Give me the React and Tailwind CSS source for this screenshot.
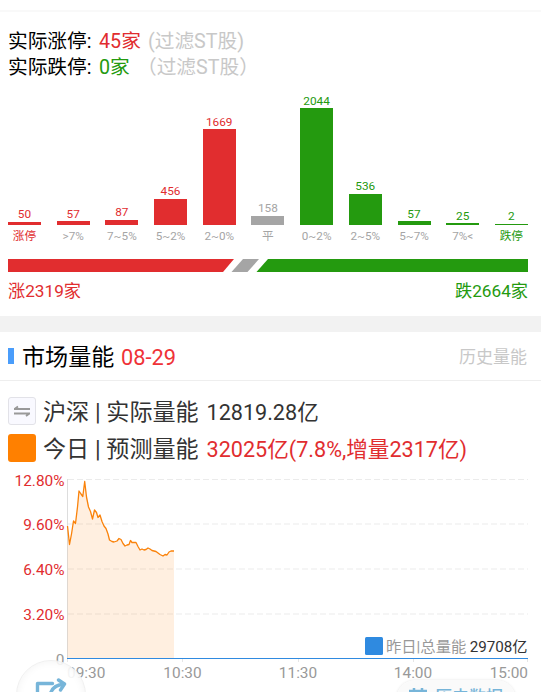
const BARS = [
  { v: 50, label: "涨停", tone: "up", strong: true },
  { v: 57, label: ">7%", tone: "up" },
  { v: 87, label: "7~5%", tone: "up" },
  { v: 456, label: "5~2%", tone: "up" },
  { v: 1669, label: "2~0%", tone: "up" },
  { v: 158, label: "平", tone: "flat" },
  { v: 2044, label: "0~2%", tone: "down" },
  { v: 536, label: "2~5%", tone: "down" },
  { v: 57, label: "5~7%", tone: "down" },
  { v: 25, label: "7%<", tone: "down" },
  { v: 2, label: "跌停", tone: "down", strong: true },
];

const TEXT = { up: "text-[#e12d2f]", flat: "text-[#a5a5a5]", down: "text-[#249a0f]" };
const FILL = { up: "bg-[#e12d2f]", flat: "bg-[#a5a5a5]", down: "bg-[#249a0f]" };

function Bar({ v, label, tone, strong }) {
  return (
    <div className="flex w-[33px] flex-col items-center">
      <div className="flex h-[129.5px] w-full flex-col items-center justify-end">
        <span className={`text-[11.8px] leading-[13.5px] ${TEXT[tone]}`}>{v}</span>
        <div className={`w-full shrink-0 ${FILL[tone]}`} style={{ height: Math.max(v * 0.057, 0.9) }} />
      </div>
      <span className={`mt-[4.5px] text-[11.7px] leading-[14px] whitespace-nowrap ${strong ? TEXT[tone] : "text-[#a5a5a5]"}`}>{label}</span>
    </div>
  );
}

function Distribution() {
  return (
    <section className="h-[316px] px-2">
      <div className="-mx-2 h-[12px] border-b-2 border-[#f9f9f9]" />
      <div className="mt-[17px] text-[19.7px] leading-[26px] text-black">
        <div className="flex">
          <span className="w-[91px]">实际涨停:</span>
          <span className="w-[49px] text-[#e12d2f]">45家</span>
          <span className="text-[#c8c8c8]">(过滤ST股)</span>
        </div>
        <div className="flex">
          <span className="w-[91px]">实际跌停:</span>
          <span className="w-[38px] text-[#249a0f]">0家</span>
          <span className="text-[#c8c8c8]">（过滤ST股）</span>
        </div>
      </div>
      <div className="mt-[14px] flex w-[520px] justify-between">
        {BARS.map((b) => (
          <Bar key={b.label} {...b} />
        ))}
      </div>
      <svg className="mt-[16px] block" width="520" height="13" viewBox="0 0 520 13">
        <path d="M0 0H226L215 13H0Z" fill="#e12d2f" />
        <path d="M235 0H251L239.500 13H223.500Z" fill="#a5a5a5" />
        <path d="M260 0H520V13H248.500Z" fill="#249a0f" />
      </svg>
      <div className="mt-[7px] flex w-[520px] justify-between text-[17.2px] leading-6">
        <span className="text-[#e12d2f]">涨2319家</span>
        <span className="text-[#249a0f]">跌2664家</span>
      </div>
    </section>
  );
}

const LINE =
  "67.500,526 69.500,544.500 71.500,534 73.500,521 75.500,523.500 77.500,507 79,491 81,494 82.800,496.500 84.700,481.500 86.500,497 88.500,507 90.500,511.500 92.500,519 94.500,510 96.500,512.500 98,517.500 100,515 102,521.500 104,526 106,528.500 108,534 109.500,540 112,541.500 114,542 117,541 119,538.500 121,539.500 123,543.500 125,546 127,545 129,544.500 130.500,540.500 132,542.500 136,542.500 138,546.500 140,550 142,549 144,550 146,549.500 148,548 150,549 152,550.500 156,551.500 158,553 160,554.500 162,555.500 163,556 165,554.500 167,555 169,552 171,551 174,551";

const GRID = [
  [480, "12.80%"],
  [524.5, "9.60%"],
  [569.5, "6.40%"],
  [614.5, "3.20%"],
];

function VolumeChart() {
  return (
    <svg className="block" width="541" height="227" viewBox="0 465 541 227" fontSize="15.4">
      {GRID.map(([y, label]) => (
        <g key={y}>
          <path d={`M68 ${y - 0.5}H528`} stroke="#ebebeb" strokeDasharray="6 3" />
          <text x="64.500" y={y + 5.5} textAnchor="end" fill="#e12d2f">{label}</text>
        </g>
      ))}
      <path d="M67.500 479V659" stroke="#ddd" />
      <path d="M182.500 659v3M298.500 659v3M413.500 659v3M527.500 659v3M67.500 659v3" stroke="#e6e6e6" />
      <polygon points={`${LINE} 174,658 67.500,658`} fill="#ff7f00" fillOpacity="0.12" />
      <polyline points={LINE} fill="none" stroke="#fa820a" strokeWidth="1.3" strokeLinejoin="round" />
      <path d="M67 658.500H528" stroke="#2f8ae0" />
      <g fill="#999">
        <text x="64.500" y="665" textAnchor="end">0</text>
        <text x="67" y="678">09:30</text>
        <text x="182.500" y="678" textAnchor="middle">10:30</text>
        <text x="298" y="678" textAnchor="middle">11:30</text>
        <text x="413" y="678" textAnchor="middle">14:00</text>
        <text x="528" y="678" textAnchor="end">15:00</text>
      </g>
      <rect x="365" y="637" width="18" height="18" rx="1.500" fill="#2f8ae0" />
      <text x="386" y="651.500" fontSize="15.3" fill="#999">昨日|总量能</text>
      <text x="527.500" y="651.500" fontSize="15.2" textAnchor="end" fill="#333">29708亿</text>
    </svg>
  );
}

function Volume() {
  return (
    <section className="h-[360px]">
      <div className="flex h-[49px] items-center border-b border-[#eee] px-2">
        <div className="h-4 w-[6px] bg-[#4a9dfb]" />
        <span className="mt-[3px] ml-2 w-[99px] text-[23.1px] leading-8 text-black">市场量能</span>
        <span className="mt-[3px] text-[21.8px] leading-8 text-[#ef3237]">08-29</span>
        <span className="mt-[2px] mr-[6px] ml-auto text-[17px] leading-8 text-[#c8c8c8]">历史量能</span>
      </div>
      <div className="flex h-[84px] flex-col gap-[9px] px-2 pt-4 text-[#333]">
        <div className="flex h-7 items-center">
          <div className="flex h-7 w-7 items-center justify-center rounded-[3px] border border-[#e2e2e8] bg-[#f9f9ff]">
            <svg width="18" height="14" viewBox="0 0 18 14" fill="none" stroke="#999" strokeWidth="1.800">
              <path d="M1 5H17M1.500 5L5 2.500M1 9.500H17M16.500 9.500L13 12" />
            </svg>
          </div>
          <span className="mt-1 ml-[7px] w-[163.5px] text-[23.1px] leading-8">沪深 | 实际量能</span>
          <span className="mt-[3px] text-[21.6px] leading-8">12819.28亿</span>
        </div>
        <div className="flex h-7 items-center">
          <div className="h-7 w-7 rounded-[3px] bg-[#ff8000]" />
          <span className="mt-1 ml-[7px] w-[163.5px] text-[23.1px] leading-8">今日 | 预测量能</span>
          <span className="mt-[3px] text-[21.6px] leading-8 text-[#e12d2f]">32025亿(7.8%,增量2317亿)</span>
        </div>
      </div>
      <VolumeChart />
    </section>
  );
}

export default function App() {
  return (
    <main className="relative h-[692px] w-[541px] overflow-hidden bg-white font-['Roboto','Noto_Sans_CJK_SC',sans-serif]">
      <Distribution />
      <div className="h-4 bg-[#f2f2f2]" />
      <Volume />
      <div className="absolute top-[660px] left-[16px] flex h-[70px] w-[70px] items-start justify-center rounded-full border border-[#f0f0f0] bg-white/90 pt-[16px] shadow-[inset_0_0_8px_rgba(0,0,0,0.05)]">
        <svg width="36" height="34" viewBox="0 0 36 34" fill="none" stroke="#77b5d9" strokeWidth="3.400" strokeLinecap="round" strokeLinejoin="round">
          <path d="M19.500 6.500H4.500V31H30V20M16.500 21C17.500 12 22 7.500 31 7.500M25.500 3L31.500 7L27.500 13" />
        </svg>
      </div>
      <div className="absolute top-[680px] left-[396px] flex h-10 w-[120px] justify-center gap-2 rounded-full bg-[#fafafa]/90 pt-[5px] text-[17px] leading-6 font-bold text-[#77b5d9] shadow-[0_0_3px_rgba(0,0,0,0.1)]">
        <svg className="mt-[3px]" width="18" height="18" viewBox="0 0 18 18" fill="none" stroke="#77b5d9" strokeWidth="2.500">
          <path d="M0 3H18M5 0V6M13 0V6M1 7H17V17H1Z" />
        </svg>
        <span className="font-medium">历史数据</span>
      </div>
    </main>
  );
}
